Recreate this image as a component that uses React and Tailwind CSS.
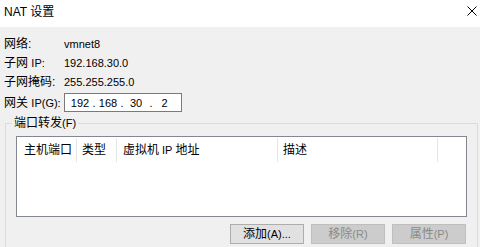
import React from "react";

const font = "font-['Liberation_Sans','Noto_Sans_CJK_SC',sans-serif]";

function Row({ label, children, className = "" }) {
  return (
    <div className={`flex h-[19px] items-center ${className}`}>
      <div className="w-[60px] shrink-0 whitespace-nowrap">{label}</div>
      {children}
    </div>
  );
}

function Btn({ children, disabled }) {
  return (
    <div
      className={`w-[74px] h-[20px] flex items-center justify-center border ${
        disabled
          ? "bg-[#cccccc] border-[#bfbfbf] text-[#8a8a8a]"
          : "bg-[#e1e1e1] border-[#adadad] text-black"
      }`}
    >
      {children}
    </div>
  );
}

export default function App() {
  return (
    <div className={`w-[480px] h-[247px] overflow-hidden bg-[#f0f0f0] text-[12px] leading-[16px] text-black ${font}`}>
      <div className="h-[27px] bg-white flex items-start justify-between pt-[4px] pl-[4px] pr-[3px]">
        <span>NAT 设置</span>
        <svg width="10" height="10" viewBox="0 0 10 10" className="mt-[2px]">
          <path d="M0.5 0.5 L9.5 9.5 M9.5 0.5 L0.5 9.5" stroke="#000" strokeWidth="1" fill="none" />
        </svg>
      </div>

      <div className="pt-[7px] pl-[4px]">
        <Row label="网络:">
          <span className="text-[11px]">vmnet8</span>
        </Row>
        <Row label={<span>子网 <span className="text-[11px]">IP:</span></span>}>
          <span className="text-[11px]">192.168.30.0</span>
        </Row>
        <Row label="子网掩码:">
          <span className="text-[11px]">255.255.255.0</span>
        </Row>
        <Row label={<span>网关 <span className="text-[11px]">IP(G):</span></span>} className="mt-[2px]">
          <div className="w-[118px] h-[19px] border border-[#7a7a7a] bg-white flex items-center pl-[4px] text-[11px]">
            <span className="w-[22px] text-center">192</span>
            <span className="w-[6px] text-center">.</span>
            <span className="w-[22px] text-center">168</span>
            <span className="w-[6px] text-center">.</span>
            <span className="w-[22px] text-center">30</span>
            <span className="w-[8px] text-center">.</span>
            <span className="w-[19px] text-center">2</span>
          </div>
        </Row>
      </div>

      <div className="relative ml-[5px] mt-[11px] w-[473px] h-[140px] border border-[#dcdcdc] pt-[12px] pl-[10px]">
        <span className="absolute left-[6px] top-[-9px] px-[2px] bg-[#f0f0f0] whitespace-nowrap">
          端口转发<span className="text-[11px]">(F)</span>
        </span>

        <div className="w-[451px] h-[81px] border border-[#828790] bg-white">
          <div className="flex h-[25px] pt-[1px]">
            <div className="w-[60px] h-[24px] flex items-center pl-[7px] border-r border-[#e5e5e5] whitespace-nowrap">主机端口</div>
            <div className="w-[40px] h-[24px] flex items-center pl-[5px] border-r border-[#e5e5e5] whitespace-nowrap">类型</div>
            <div className="w-[161px] h-[24px] flex items-center pl-[6px] border-r border-[#e5e5e5] whitespace-nowrap">
              虚拟机 <span className="text-[11px] mx-[3px]">IP</span> 地址
            </div>
            <div className="w-[160px] h-[24px] flex items-center pl-[5px] border-r border-[#e5e5e5] whitespace-nowrap">描述</div>
          </div>
        </div>

        <div className="w-[450px] flex justify-end gap-[7px] mt-[7px]">
          <Btn>
            添加<span className="text-[11px]">(A)...</span>
          </Btn>
          <Btn disabled>
            移除<span className="text-[11px]">(R)</span>
          </Btn>
          <Btn disabled>
            属性<span className="text-[11px]">(P)</span>
          </Btn>
        </div>
      </div>
    </div>
  );
}
